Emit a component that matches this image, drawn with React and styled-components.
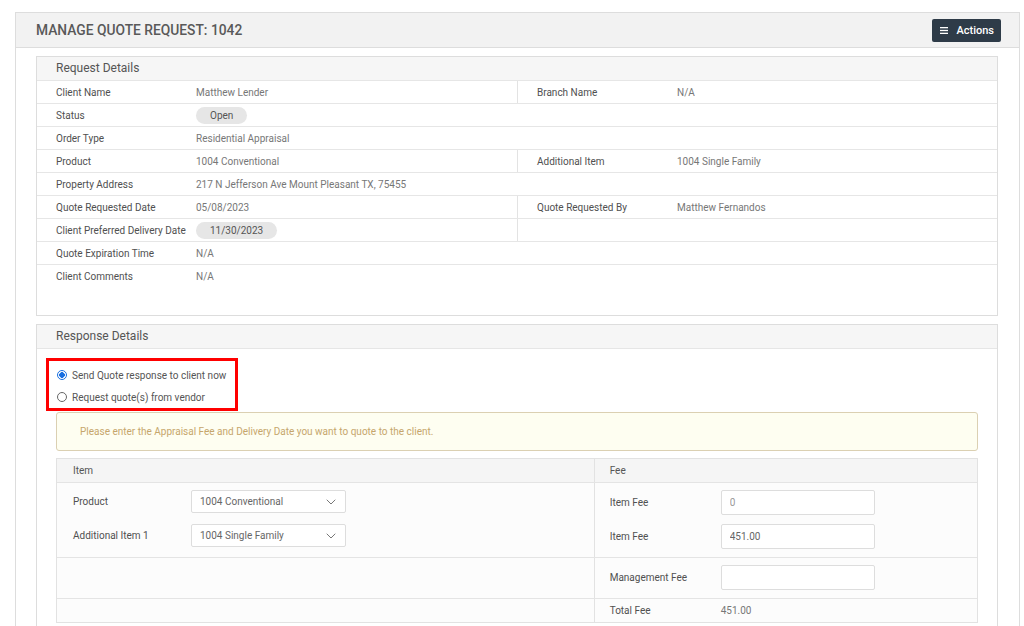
import React from "react";
import styled, { createGlobalStyle } from "styled-components";
import { ChevronDown } from "lucide-react";

const GlobalStyle = createGlobalStyle`
  body {
    margin: 0;
    background: #fff;
    font-family: Roboto, "Liberation Sans", sans-serif;
    color: #555;
  }
`;

const details = [
  { label: "Client Name", value: "Matthew Lender", side: { label: "Branch Name", value: "N/A" } },
  { label: "Status", value: "Open", pill: true },
  { label: "Order Type", value: "Residential Appraisal" },
  { label: "Product", value: "1004 Conventional", side: { label: "Additional Item", value: "1004 Single Family" } },
  { label: "Property Address", value: "217 N Jefferson Ave Mount Pleasant TX, 75455" },
  { label: "Quote Requested Date", value: "05/08/2023", side: { label: "Quote Requested By", value: "Matthew Fernandos" } },
  { label: "Client Preferred Delivery Date", value: "11/30/2023", pill: true, side: {} },
  { label: "Quote Expiration Time", value: "N/A" },
  { label: "Client Comments", value: "N/A", tall: true },
];

const App = () => {
  return (
    <>
      <GlobalStyle />
      <Page>
        <OuterPanel>
          <OuterHeader>
            <Title>MANAGE QUOTE REQUEST: 1042</Title>
            <ActionsButton>
              <svg width="8" height="7" viewBox="0 0 8 7">
                <rect x="0" y="0" width="8" height="1.3" fill="#fff" />
                <rect x="0" y="2.85" width="8" height="1.3" fill="#fff" />
                <rect x="0" y="5.7" width="8" height="1.3" fill="#fff" />
              </svg>
              Actions
            </ActionsButton>
          </OuterHeader>
          <OuterBody>
            <Panel>
              <PanelHeading>Request Details</PanelHeading>
              {details.map((row, i) => (
                <DetailRow key={i} $split={!!row.side} $tall={row.tall}>
                  <Cell>
                    <Label>{row.label}</Label>
                    {row.pill ? <Pill>{row.value}</Pill> : <Value>{row.value}</Value>}
                  </Cell>
                  {row.side && (
                    <SideCell>
                      <Label>{row.side.label}</Label>
                      <Value>{row.side.value}</Value>
                    </SideCell>
                  )}
                </DetailRow>
              ))}
            </Panel>

            <Panel>
              <PanelHeading>Response Details</PanelHeading>
              <ResponseBody>
                <RadioBox>
                  <RadioRow>
                    <RadioDot $checked />
                    Send Quote response to client now
                  </RadioRow>
                  <RadioRow>
                    <RadioDot />
                    Request quote(s) from vendor
                  </RadioRow>
                </RadioBox>
                <Alert>Please enter the Appraisal Fee and Delivery Date you want to quote to the client.</Alert>

                <FeeTable>
                  <FeeRow $head>
                    <FeeCell>Item</FeeCell>
                    <FeeCell $right>Fee</FeeCell>
                  </FeeRow>
                  <FeeRow>
                    <FeeCell $form>
                      <ItemField>
                        <FieldLabel>Product</FieldLabel>
                        <SelectBox>
                          1004 Conventional
                          <ChevronDown size={16} strokeWidth={1.5} color="#777" />
                        </SelectBox>
                      </ItemField>
                      <ItemField>
                        <FieldLabel>Additional Item 1</FieldLabel>
                        <SelectBox>
                          1004 Single Family
                          <ChevronDown size={16} strokeWidth={1.5} color="#777" />
                        </SelectBox>
                      </ItemField>
                    </FeeCell>
                    <FeeCell $right $form>
                      <FeeField>
                        <FieldLabel>Item Fee</FieldLabel>
                        <TextInput $muted defaultValue="0" />
                      </FeeField>
                      <FeeField>
                        <FieldLabel>Item Fee</FieldLabel>
                        <TextInput defaultValue="451.00" />
                      </FeeField>
                    </FeeCell>
                  </FeeRow>
                  <FeeRow>
                    <FeeCell />
                    <FeeCell $right $form>
                      <FeeField>
                        <FieldLabel>Management Fee</FieldLabel>
                        <TextInput defaultValue="" />
                      </FeeField>
                    </FeeCell>
                  </FeeRow>
                  <FeeRow $last>
                    <FeeCell />
                    <FeeCell $right>
                      <FeeField>
                        <FieldLabel>Total Fee</FieldLabel>
                        <Value>451.00</Value>
                      </FeeField>
                    </FeeCell>
                  </FeeRow>
                </FeeTable>
              </ResponseBody>
            </Panel>
          </OuterBody>
        </OuterPanel>
      </Page>
    </>
  );
};

const Page = styled.div`
  padding: 12px 4px 0 15px;
`;

const OuterPanel = styled.div`
  border: 1px solid #ddd;
  background: #fff;
`;

const OuterHeader = styled.div`
  height: 34px;
  display: flex;
  align-items: center;
  justify-content: space-between;
  padding: 0 18px 0 20px;
  background: #f2f2f2;
  border-bottom: 1px solid #ddd;
`;

const Title = styled.h1`
  margin: 0;
  font-size: 13.8px;
  font-weight: 500;
  color: #595959;
`;

const ActionsButton = styled.button`
  height: 23px;
  display: flex;
  align-items: center;
  gap: 8px;
  padding: 0 7px 0 8px;
  border: none;
  border-radius: 2px;
  background: #2e3b48;
  color: #fff;
  font-family: Roboto, "Liberation Sans", sans-serif;
  font-size: 11px;
  font-weight: 500;
`;

const OuterBody = styled.div`
  padding: 8px 21px 0 20px;
`;

const Panel = styled.div`
  border: 1px solid #ddd;
  background: #fff;
  margin-bottom: 8px;
`;

const PanelHeading = styled.div`
  height: 23px;
  line-height: 23px;
  padding-left: 19px;
  background: #f6f6f6;
  border-bottom: 1px solid #e6e6e6;
  font-size: 12px;
  color: #555;
`;

const DetailRow = styled.div`
  display: grid;
  grid-template-columns: ${(p) => (p.$split ? "1fr 1fr" : "1fr")};
  height: ${(p) => (p.$tall ? "50px" : "22px")};
  border-bottom: ${(p) => (p.$tall ? "none" : "1px solid #e6e6e6")};
  align-items: ${(p) => (p.$tall ? "start" : "stretch")};
`;

const Cell = styled.div`
  display: flex;
  align-items: center;
  height: 22px;
  padding-left: 19px;
`;

const SideCell = styled(Cell)`
  border-left: 1px solid #e3e3e3;
`;

const Label = styled.span`
  width: 140px;
  flex-shrink: 0;
  font-size: 10px;
  color: #505050;
  white-space: nowrap;
`;

const Value = styled.span`
  font-size: 10px;
  color: #777;
`;

const Pill = styled.span`
  min-width: 49px;
  box-sizing: border-box;
  height: 17px;
  line-height: 17px;
  padding: 0 14px;
  border-radius: 9px;
  background: #e6e6e6;
  text-align: center;
  font-size: 10px;
  color: #555;
`;

const ResponseBody = styled.div`
  padding: 9px 19px 24px 19px;
`;

const RadioBox = styled.div`
  width: 192px;
  box-sizing: border-box;
  margin-left: -10px;
  padding: 3px 8px 0;
  border: 3px solid #f00;
  display: flex;
  flex-direction: column;
`;

const RadioRow = styled.label`
  height: 22px;
  display: flex;
  align-items: center;
  gap: 5px;
  font-size: 10px;
  color: #555;
  white-space: nowrap;
`;

const RadioDot = styled.span`
  width: 10px;
  height: 10px;
  box-sizing: border-box;
  border-radius: 50%;
  flex-shrink: 0;
  border: 1px solid ${(p) => (p.$checked ? "#1a6fe0" : "#666")};
  background: ${(p) =>
    p.$checked ? "radial-gradient(circle, #1a6fe0 0 2.6px, #fff 3px)" : "#fff"};
`;

const Alert = styled.div`
  margin-top: 1px;
  height: 39px;
  box-sizing: border-box;
  display: flex;
  align-items: center;
  padding-left: 23px;
  background: #fefef1;
  border: 1px solid #dbd0b2;
  border-radius: 3px;
  font-size: 10px;
  color: #c6a66c;
`;

const FeeTable = styled.div`
  margin-top: 7px;
  border: 1px solid #e2e2e2;
  background: #fcfcfc;
`;

const FeeRow = styled.div`
  display: grid;
  grid-template-columns: 7fr 5fr;
  min-height: ${(p) => (p.$head || p.$last ? "23px" : "0")};
  background: ${(p) => (p.$head ? "#f5f5f5" : "transparent")};
  border-bottom: ${(p) => (p.$last ? "none" : "1px solid #e4e4e4")};
  font-size: 10px;
  color: #555;
`;

const FeeCell = styled.div`
  display: flex;
  flex-direction: column;
  justify-content: center;
  gap: ${(p) => (p.$right ? "9px" : "11px")};
  padding: ${(p) => (p.$form ? "7px 0 8px" : "0")};
  padding-left: ${(p) => (p.$right ? "15px" : "16px")};
  border-left: ${(p) => (p.$right ? "1px solid #e2e2e2" : "none")};
  ${(p) => p.$form && !p.$right && "justify-content: flex-start;"}
`;

const ItemField = styled.div`
  display: flex;
  align-items: center;
`;

const FeeField = styled.div`
  display: flex;
  align-items: center;
`;

const FieldLabel = styled.span`
  width: 118px;
  flex-shrink: 0;
  font-size: 10px;
  color: #505050;
  ${FeeField} & {
    width: 111px;
  }
`;

const SelectBox = styled.div`
  width: 155px;
  height: 23px;
  box-sizing: border-box;
  display: flex;
  align-items: center;
  justify-content: space-between;
  padding: 0 6px 0 8px;
  border: 1px solid #ddd;
  border-radius: 2px;
  background: #fff;
  font-size: 10px;
  color: #666;
`;

const TextInput = styled.input`
  width: 154px;
  height: 25px;
  box-sizing: border-box;
  padding: 0 8px;
  border: 1px solid #ddd;
  border-radius: 2px;
  background: #fff;
  outline: none;
  font-family: Roboto, "Liberation Sans", sans-serif;
  font-size: 10px;
  color: ${(p) => (p.$muted ? "#999" : "#666")};
`;

export default App;
